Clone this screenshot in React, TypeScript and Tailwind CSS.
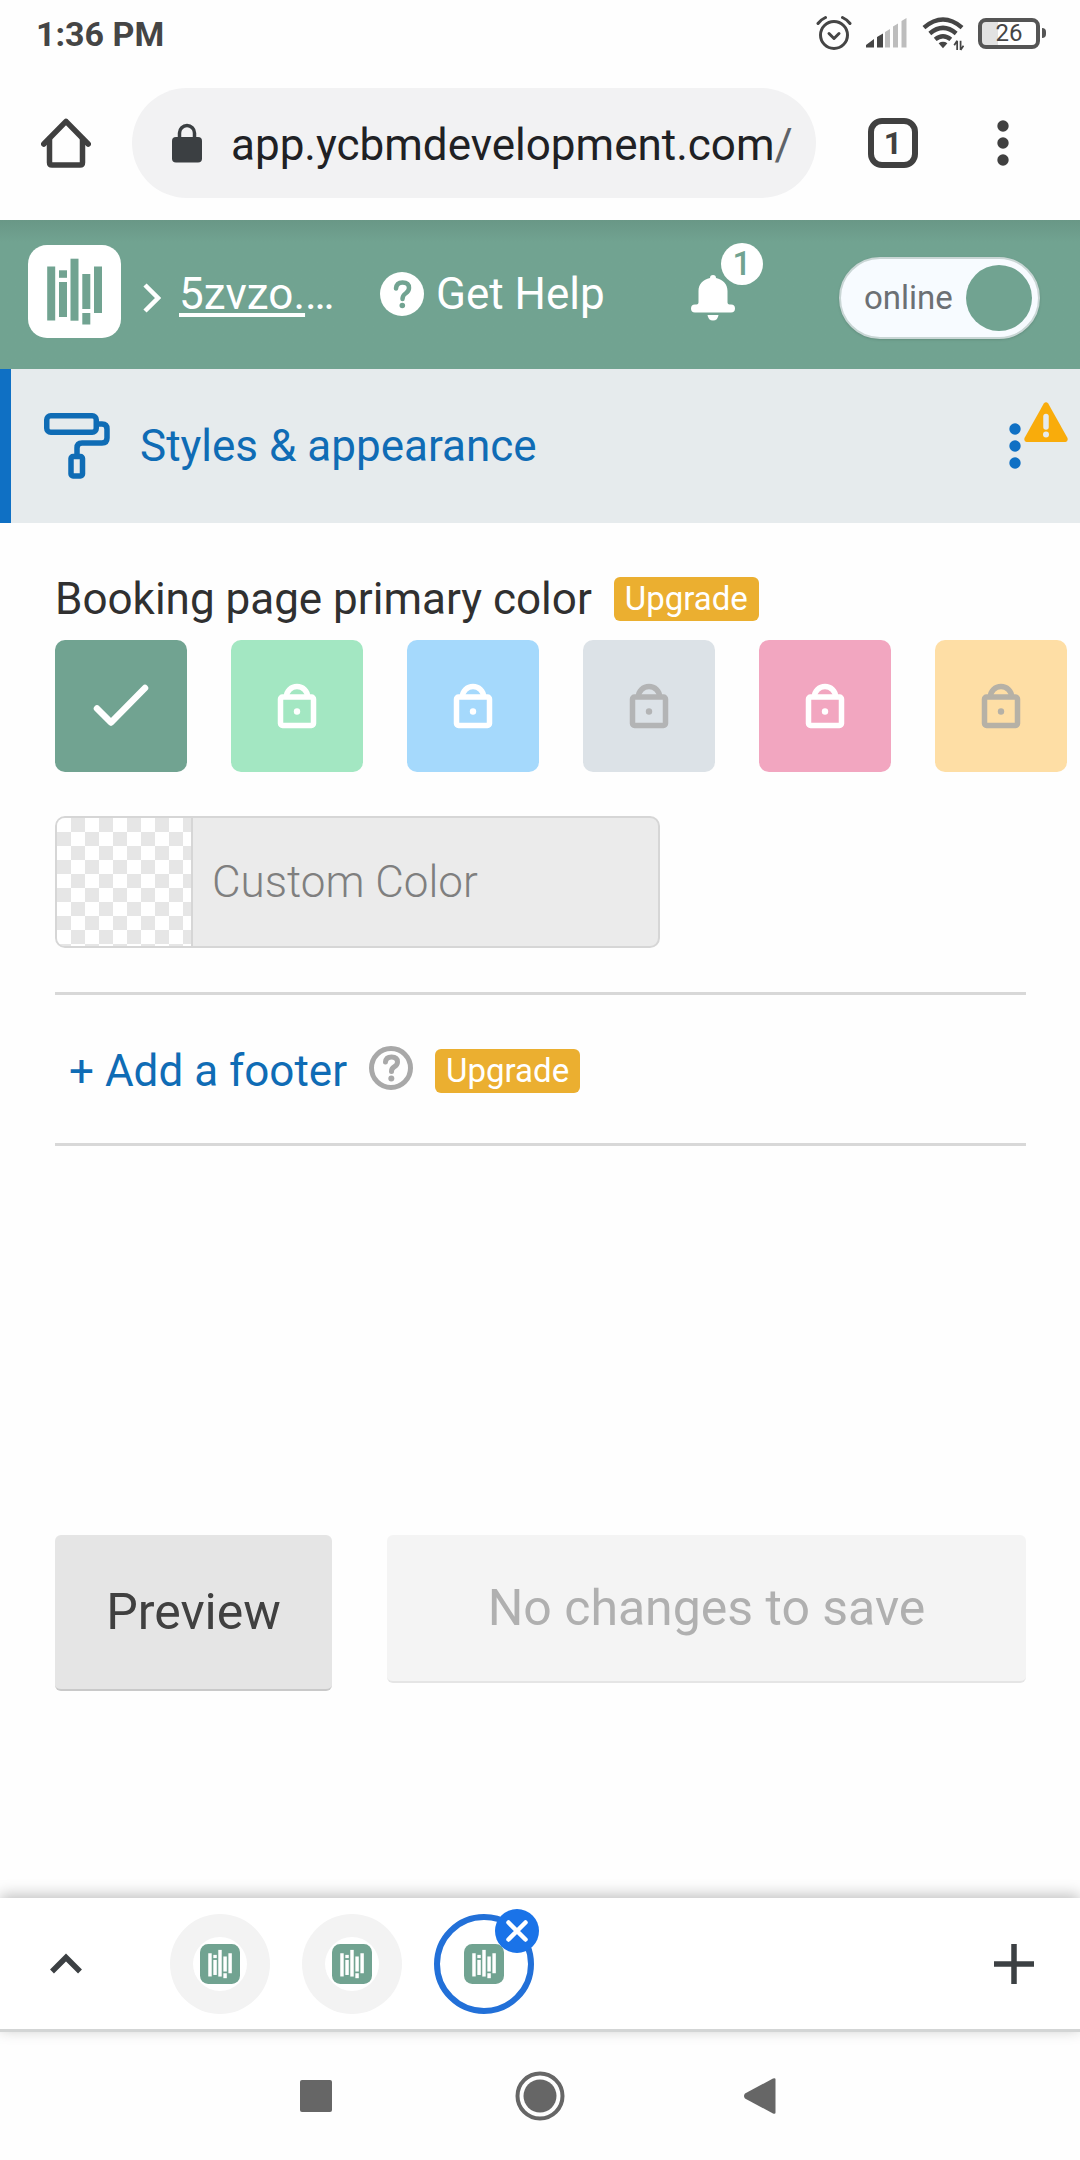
import { useState } from 'react'

interface Swatch {
  name: string
  className: string
  iconClassName: string
  locked: boolean
}

const swatches: Swatch[] = [
  { name: 'Sage', className: 'bg-[#71a391]', iconClassName: 'text-white', locked: false },
  { name: 'Mint', className: 'bg-[#a3e7c2]', iconClassName: 'text-white', locked: true },
  { name: 'Sky', className: 'bg-[#a5d9fc]', iconClassName: 'text-white', locked: true },
  { name: 'Silver', className: 'bg-[#dce2e7]', iconClassName: 'text-[#b3b4b5]', locked: true },
  { name: 'Rose', className: 'bg-[#f2a6c0]', iconClassName: 'text-white', locked: true },
  { name: 'Peach', className: 'bg-[#fedea5]', iconClassName: 'text-[#b6b1a6]', locked: true },
]

function Logo({ size, className, barClassName }: { size: number; className: string; barClassName: string }) {
  return (
    <svg width={size} height={size} viewBox="0 0 93 93" aria-hidden="true">
      <rect width="93" height="93" rx="19" className={className} />
      <g className={barClassName}>
        <rect x="19.200" y="21.500" width="8" height="54" />
        <rect x="31" y="25.300" width="8" height="7.500" />
        <rect x="31" y="37" width="8" height="35" />
        <rect x="42.500" y="13.700" width="8" height="62" />
        <rect x="54.300" y="29" width="8" height="35" />
        <rect x="54.300" y="68" width="8" height="11.500" />
        <rect x="66" y="21.500" width="8" height="46.500" />
      </g>
    </svg>
  )
}

function Dots() {
  return (
    <svg width="24" height="48" viewBox="0 0 24 48" fill="currentColor" aria-hidden="true">
      <circle cx="12" cy="7" r="5.700" />
      <circle cx="12" cy="24" r="5.700" />
      <circle cx="12" cy="41" r="5.700" />
    </svg>
  )
}

function UpgradeBadge() {
  return (
    <a href="#upgrade" className="rounded-md bg-[#ebaf30] px-[11px] text-[33px] leading-[44px] text-white">
      Upgrade
    </a>
  )
}

function StatusBar() {
  return (
    <div className="flex h-[66px] items-center justify-between pr-[34px] pl-9 text-[#454545]">
      <span className="pt-0.5 text-[34px] leading-10 font-bold">1:36 PM</span>
      <div className="flex items-center gap-[14px]">
        <svg width="36" height="36" viewBox="0 0 36 36" fill="none" stroke="currentColor" strokeWidth="3" strokeLinecap="round" strokeLinejoin="round" aria-hidden="true">
          <circle cx="18" cy="20" r="13.500" />
          <path d="m13 18.500 5 5 5-5" />
          <path d="M2 8.500Q5 4.500 9.500 2.500M34 8.500Q31 4.500 26.500 2.500" />
        </svg>
        <svg width="42" height="36" viewBox="0 0 42 36" aria-hidden="true">
          <path d="M0 32.500V30l8-6v8.500zM11 32.500V22l6-3.500v14z" fill="#454545" />
          <path d="M19 32.500V17l5-3v18.500zM27 32.500V11.500l5-3v24zM35.500 32.500V6l5-3v29.500z" fill="#bdbdbd" />
        </svg>
        <svg width="42" height="36" viewBox="0 0 43 36" fill="none" stroke="currentColor" strokeWidth="4.500" aria-hidden="true">
          <path d="M2 12.500Q21.500-4 41 12.500" />
          <path d="M8 18.500Q21.500 7 35 18.500" />
          <path d="M13.500 24.500Q21.500 18 29.500 24.500" />
          <path d="m17 28.500 4.500 5 4.500-5q-4.500-3-9 0z" fill="currentColor" stroke="none" />
          <path d="M36 26v9.500M39.500 26v9.500M36 26l-3 4.500M39.500 35.500l3-4.500" strokeWidth="1.800" />
        </svg>
        <div className="flex items-center gap-0.5">
          <div className="flex h-[31px] w-[62px] items-center justify-center rounded-lg border-4 border-[#555] bg-linear-to-r from-[#e2e2e2] from-30% to-white to-30% text-[24px] leading-6">
            26
          </div>
          <div className="h-2.5 w-1 rounded-r-sm bg-[#555]" />
        </div>
      </div>
    </div>
  )
}

function BrowserBar() {
  return (
    <div className="flex h-[154px] items-center pr-[65px] pl-[41px] text-[#404040]">
      <button type="button" aria-label="Home">
        <svg width="50" height="50" viewBox="0 0 50 50" fill="none" stroke="currentColor" strokeWidth="5.500" strokeLinecap="round" strokeLinejoin="round" aria-hidden="true">
          <path d="M2.800 26 25 3.300 47.200 26" />
          <path d="M8.500 21v23.500q0 2.500 2.500 2.500h28q2.500 0 2.500-2.500V21" />
        </svg>
      </button>
      <div className="ml-[41px] flex h-[110px] min-w-0 flex-1 items-center overflow-hidden rounded-full bg-[#f2f2f3] pl-10 text-[44px] leading-[52px]">
        <svg width="30" height="40" viewBox="0 0 30 40" className="mr-[29px] shrink-0 text-[#3b3f42]" aria-hidden="true">
          <rect y="14" width="30" height="25.500" rx="4" fill="currentColor" />
          <path d="M7.500 15V10a7.500 7.500 0 0 1 15 0v5" fill="none" stroke="currentColor" strokeWidth="3.500" />
        </svg>
        <input
          aria-label="Address"
          defaultValue="app.ycbmdevelopment.com"
          className="field-sizing-content bg-transparent pt-1 text-[#202124] outline-none"
        />
        <span className="pt-1 text-[#5f6368]">/</span>
      </div>
      <button type="button" aria-label="Open tabs" className="ml-[52px] flex size-[50px] items-center justify-center rounded-[14px] border-6 border-current text-[32px] leading-8 font-bold">
        1
      </button>
      <button type="button" aria-label="Browser menu" className="ml-[73px]">
        <Dots />
      </button>
    </div>
  )
}

function AppHeader() {
  const [online, setOnline] = useState(true)

  return (
    <header className="flex h-[149px] items-center bg-[#71a391] bg-linear-to-b from-[#699786] to-[#71a391] to-15% pr-10 pl-7 text-[44px] leading-[52px] text-white">
      <a href="#home" aria-label="Dashboard" className="pb-1.5">
        <Logo size={93} className="fill-white" barClassName="fill-[#71a391]" />
      </a>
      <svg width="18" height="30" viewBox="0 0 18 30" fill="none" stroke="currentColor" strokeWidth="4.500" className="mt-1.5 ml-[22px]" aria-hidden="true">
        <path d="m2 2 13 13L2 28" />
      </svg>
      <a href="#profile" className="ml-[18px] w-[155px] shrink-0 pb-0.5 whitespace-nowrap">
        <span className="underline decoration-4 underline-offset-4">5zvzo.</span>…
      </a>
      <a href="#help" className="ml-[46px] flex items-center gap-3 pb-0.5 whitespace-nowrap">
        <svg width="44" height="44" viewBox="0 0 44 44" aria-hidden="true">
          <circle cx="22" cy="22" r="22" fill="currentColor" />
          <path d="M16 16.500q.5-6 6.500-6 6.500 0 6.500 5.500 0 3-3.500 5.500-3 2-3 5.500" fill="none" stroke="#71a391" strokeWidth="4.500" strokeLinecap="round" />
          <circle cx="22.300" cy="33.500" r="2.800" fill="#71a391" />
        </svg>
        Get Help
      </a>
      <div className="ml-auto flex items-center gap-[104px] pt-1.5">
        <button type="button" aria-label="Notifications" className="relative">
          <svg width="44" height="46" viewBox="0 0 44 46" fill="currentColor" aria-hidden="true">
            <path d="M19 3a3 3 0 0 1 6 0c7 1.500 11.500 6 11.500 13v11.500q0 2 2 2h1.500a4 4 0 0 1 0 8H4a4 4 0 0 1 0-8h1.500q2 0 2-2V16C7.500 9 12 4.500 19 3z" />
            <path d="M16.500 40h11q-.8 5.500-5.500 5.500T16.500 40z" />
          </svg>
          <span className="absolute -top-8 left-[30px] flex size-[42px] items-center justify-center rounded-full bg-white text-[33px] leading-8 font-medium text-[#71a391]">
            1
          </span>
        </button>
        <label className="flex h-[82px] w-[201px] items-center justify-between rounded-full border-2 border-[#c9d6d5] bg-[#f7fbff] pr-1.5 pl-[23px] text-[33px] leading-10 text-[#6c7074] shadow-sm">
          <input type="checkbox" role="switch" className="sr-only" checked={online} onChange={(e) => setOnline(e.target.checked)} />
          {online ? 'online' : 'offline'}
          <span className="size-[66px] rounded-full bg-[#71a391]" />
        </label>
      </div>
    </header>
  )
}

function SectionBar() {
  return (
    <div className="flex h-[154px] items-center border-l-11 border-[#0f70c4] bg-[#e6ebed] pr-[53px] pl-[33px] text-[#0f6cb5]">
      <svg width="66" height="66" viewBox="0 0 66 66" fill="none" stroke="currentColor" strokeWidth="5.500" strokeLinejoin="round" aria-hidden="true">
        <rect x="2.750" y="2.750" width="49.500" height="16.500" rx="4" />
        <path d="M53 11h5q5 0 5 5v9q0 5-5 5H38q-5 0-5 5v7" />
        <rect x="27" y="43.500" width="11.500" height="19.500" rx="2" />
      </svg>
      <h1 className="ml-[30px] text-[44px] leading-[52px]">Styles &amp; appearance</h1>
      <button type="button" aria-label="Section menu" className="relative ml-auto text-[#0f70c4]">
        <Dots />
        <svg width="46" height="40" viewBox="0 0 46 40" className="absolute -top-5 left-5" aria-hidden="true">
          <path d="M20.800 1.500q2.200-2.500 4.400 0L44.500 36q.8 3.500-2 4h-39q-2.800-.5-2-4z" fill="#f9ac0b" />
          <path d="M23 14.500v10.500" stroke="#e6ebed" strokeWidth="5.500" strokeLinecap="round" />
          <circle cx="23" cy="32.500" r="3" fill="#e6ebed" />
        </svg>
      </button>
    </div>
  )
}

function SwatchIcon({ locked }: { locked: boolean }) {
  if (!locked) {
    return (
      <svg width="56" height="44" viewBox="0 0 56 44" fill="none" stroke="currentColor" strokeWidth="6.500" strokeLinecap="round" strokeLinejoin="round" aria-hidden="true">
        <path d="M4 24.500 18 38.500 52 4" />
      </svg>
    )
  }
  return (
    <svg width="40" height="46" viewBox="0 0 40 46" fill="none" stroke="currentColor" strokeWidth="5.500" aria-hidden="true">
      <rect x="3.500" y="14" width="33" height="28.500" rx="2" />
      <path d="M9.500 13.500a10.500 10 0 0 1 21 0" />
      <circle cx="20" cy="28.500" r="3.200" fill="currentColor" stroke="none" />
    </svg>
  )
}

function StyleForm() {
  return (
    <main className="flex flex-1 flex-col pt-[51px] pr-[54px] pb-[207px] pl-[55px] text-[44px] leading-[50px] text-[#303030]">
      <div className="flex items-center gap-[22px]">
        <h2 className="whitespace-nowrap">Booking page primary color</h2>
        <UpgradeBadge />
      </div>
      <div className="mt-4 flex gap-11">
        {swatches.map((swatch) => (
          <button
            key={swatch.name}
            type="button"
            aria-label={swatch.name}
            disabled={swatch.locked}
            className={`flex size-[132px] shrink-0 items-center justify-center rounded-[10px] ${swatch.className} ${swatch.iconClassName}`}
          >
            <SwatchIcon locked={swatch.locked} />
          </button>
        ))}
      </div>
      <div className="mt-11 flex h-[132px] w-full max-w-[605px] overflow-hidden rounded-[10px] border-2 border-[#d6d6d6] bg-[#ebebeb]">
        <div className="w-[136px] shrink-0 border-r-2 border-[#d6d6d6] bg-[conic-gradient(#e6e6e6_25%,#fff_0_50%,#e6e6e6_0_75%,#fff_0)] bg-size-[28px_28px]" />
        <input
          disabled
          aria-label="Custom Color"
          placeholder="Custom Color"
          className="min-w-0 flex-1 px-[19px] font-light placeholder:text-[#7f7f7f]"
        />
      </div>
      <div className="mt-11 flex h-[154px] items-center border-y-3 border-[#d8d8d8] pt-1 pl-3.5">
        <button type="button" className="whitespace-nowrap text-[#0f6cb5]">+ Add a footer</button>
        <button type="button" aria-label="About footers" className="mr-[22px] ml-[22px] pb-1.5">
          <svg width="44" height="44" viewBox="0 0 44 44" fill="none" stroke="#a8a8a8" strokeLinecap="round" aria-hidden="true">
            <circle cx="22" cy="22" r="19.500" strokeWidth="5" />
            <path d="M16.500 16q.5-5 6-5 6 0 6 5 0 3-3.500 5-2.500 1.500-2.500 4.500" strokeWidth="5" />
            <circle cx="22.300" cy="32.500" r="3" fill="#a8a8a8" stroke="none" />
          </svg>
        </button>
        <UpgradeBadge />
      </div>
      <div className="mt-auto flex items-start gap-[55px] text-[50px]">
        <button type="button" className="h-[156px] w-[277px] shrink-0 rounded-md border-b-2 border-[#c9c9c9] bg-[#e5e5e5] text-[#404040]">
          Preview
        </button>
        <button type="button" disabled className="h-[148px] flex-1 rounded-md border-b-2 border-[#e5e5e5] bg-[#f4f4f4] text-[#b0b0b0]">
          No changes to save
        </button>
      </div>
    </main>
  )
}

function TabStrip() {
  return (
    <div className="flex h-[134px] items-center border-b-3 border-[#d3d5d5] bg-white pr-[46px] pl-[50px] text-[#3c4043] shadow-[0_-3px_14px_rgba(0,0,0,0.25)]">
      <button type="button" aria-label="Expand tabs" className="mr-[88px]">
        <svg width="32" height="24" viewBox="0 0 32 24" fill="none" stroke="currentColor" strokeWidth="5.500" aria-hidden="true">
          <path d="m2 19.500 14-14 14 14" />
        </svg>
      </button>
      <div className="flex gap-8">
        {['Tab 1', 'Tab 2'].map((tab) => (
          <button key={tab} type="button" aria-label={tab} className="flex size-[100px] items-center justify-center rounded-full bg-[#f3f3f3]">
            <span className="flex size-[54px] items-center justify-center rounded-full bg-white">
              <Logo size={40} className="fill-[#71a391]" barClassName="fill-white" />
            </span>
          </button>
        ))}
        <button type="button" aria-label="Close Tab 3" className="relative flex size-[100px] items-center justify-center rounded-full border-6 border-[#2270d8]">
          <Logo size={40} className="fill-[#71a391]" barClassName="fill-white" />
          <span className="absolute -top-[11px] -right-[11px] flex size-11 items-center justify-center rounded-full bg-[#1a73e8]">
            <svg width="22" height="22" viewBox="0 0 22 22" stroke="#fff" strokeWidth="4.500" strokeLinecap="round" aria-hidden="true">
              <path d="m2.500 2.500 17 17M19.500 2.500l-17 17" />
            </svg>
          </span>
        </button>
      </div>
      <button type="button" aria-label="New tab" className="ml-auto">
        <svg width="40" height="40" viewBox="0 0 40 40" stroke="currentColor" strokeWidth="5.500" aria-hidden="true">
          <path d="M20 0v40M0 20h40" />
        </svg>
      </button>
    </div>
  )
}

function SystemNav() {
  return (
    <nav className="flex h-32 items-center justify-center text-[#666]">
      <button type="button" aria-label="Recent apps" className="mr-[183px] size-8 rounded-xs bg-current" />
      <button type="button" aria-label="Home screen">
        <svg width="50" height="50" viewBox="0 0 50 50" aria-hidden="true">
          <circle cx="25" cy="25" r="22.500" fill="none" stroke="currentColor" strokeWidth="4" />
          <circle cx="25" cy="25" r="16.500" fill="currentColor" />
        </svg>
      </button>
      <button type="button" aria-label="Back" className="mr-1 ml-[179px]">
        <svg width="32" height="36" viewBox="0 0 32 36" fill="currentColor" aria-hidden="true">
          <path d="M1 20.500q-2-2.500 0-5L29 .5q2.500-1 2.500 1v33q0 2-2.500 1z" />
        </svg>
      </button>
    </nav>
  )
}

export default function App() {
  return (
    <div className="flex min-h-screen flex-col overflow-x-hidden bg-[#fefefe] font-[Roboto,sans-serif]">
      <StatusBar />
      <BrowserBar />
      <AppHeader />
      <SectionBar />
      <StyleForm />
      <TabStrip />
      <SystemNav />
    </div>
  )
}
